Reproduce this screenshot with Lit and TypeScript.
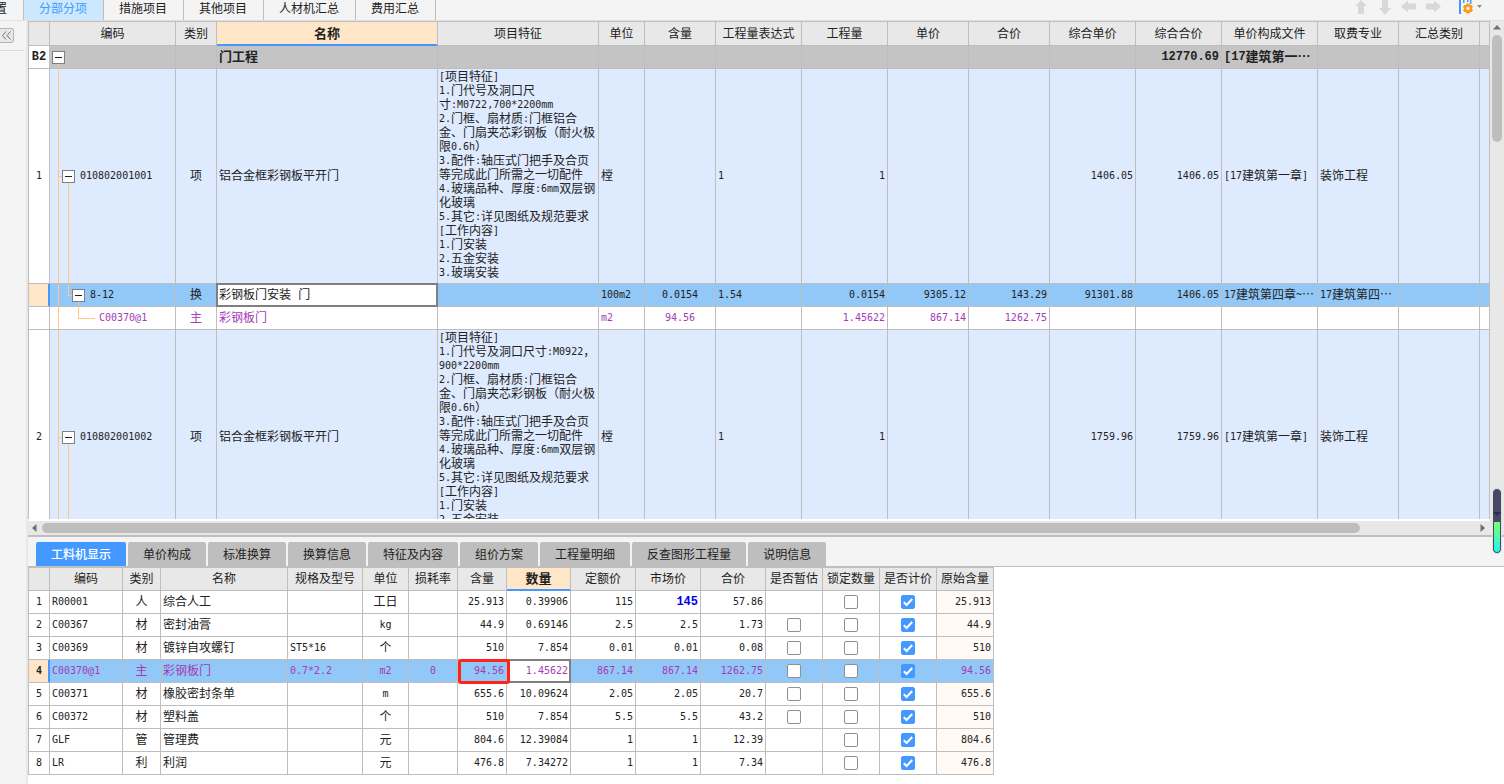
import { LitElement, html, css, nothing } from "lit";
import { customElement } from "lit/decorators.js";
import { classMap } from "lit/directives/class-map.js";

// Splits a label so that its Latin letters and digits get the half-width face.
const mix = (text: string) =>
  text
    .split(/([\x20-\x7e]+)/)
    .filter((part) => part !== "")
    .map((part) => (/^[\x20-\x7e]/.test(part) ? html`<span class="m">${part}</span>` : part));

interface Column {
  label: string;
  width: number;
  align: "left" | "center" | "right";
  current?: boolean;
}

const sharedStyles = css`
  * {
    box-sizing: border-box;
  }
  button,
  input {
    font: inherit;
    color: inherit;
    margin: 0;
    padding: 0;
    border: 0;
    border-radius: 0;
    background: none;
  }
  table {
    border-collapse: separate;
    border-spacing: 0;
    table-layout: fixed;
    font: 12px/14px "Noto Sans CJK SC", sans-serif;
    color: #222;
  }
  th,
  td {
    height: 23px;
    padding: 0 2px 2px;
    border: 0 solid #bebebe;
    border-width: 0 1px 1px 0;
    font-weight: 400;
    white-space: nowrap;
    overflow: hidden;
    vertical-align: middle;
    text-align: left;
  }
  tr > :first-child {
    border-left-width: 1px;
    text-align: center;
  }
  thead th {
    background: #e8e8e8;
    border-top-width: 1px;
    height: 24px;
    text-align: center;
  }
  thead th.current {
    background: #ffe6c8;
    font-weight: 700;
    font-size: 13px;
    border-bottom-color: #4399ff;
    box-shadow: inset 0 -1px #4399ff;
  }
  .m {
    font: 10px/10px "DejaVu Sans Mono", monospace;
    vertical-align: 1px;
  }
  .center {
    text-align: center;
  }
  .right {
    text-align: right;
  }
  .selected > * {
    background-color: #92c8f8;
  }
  .selected > th {
    background-color: #ffe6c8;
    border-right-color: #4399ff;
    box-shadow: inset -1px 0 #4399ff;
  }
  .purple > td {
    color: #a639b5;
  }
  td.edit {
    padding: 0;
    overflow: visible;
  }
  td.edit input {
    display: block;
    width: 100%;
    height: 22px;
    padding: 0 2px;
    background: #fff;
    outline: 2px solid #7f7f7f;
    outline-offset: -1px;
  }
`;

const featureText = (first: string[]) => [
  "[项目特征]",
  ...first,
  "2.门框、扇材质:门框铝合",
  "金、门扇夹芯彩钢板（耐火极",
  "限0.6h）",
  "3.配件:轴压式门把手及合页",
  "等完成此门所需之一切配件",
  "4.玻璃品种、厚度:6mm双层钢",
  "化玻璃",
  "5.其它:详见图纸及规范要求",
  "[工作内容]",
  "1.门安装",
  "2.五金安装",
  "3.玻璃安装",
];

const billColumns: Column[] = [
  { label: "编码", width: 126, align: "left" },
  { label: "类别", width: 41, align: "center" },
  { label: "名称", width: 221, align: "left", current: true },
  { label: "项目特征", width: 161, align: "left" },
  { label: "单位", width: 46, align: "left" },
  { label: "含量", width: 71, align: "center" },
  { label: "工程量表达式", width: 86, align: "left" },
  { label: "工程量", width: 86, align: "right" },
  { label: "单价", width: 81, align: "right" },
  { label: "合价", width: 81, align: "right" },
  { label: "综合单价", width: 86, align: "right" },
  { label: "综合合价", width: 86, align: "right" },
  { label: "单价构成文件", width: 96, align: "left" },
  { label: "取费专业", width: 81, align: "left" },
  { label: "汇总类别", width: 81, align: "left" },
];

interface BillRow {
  no: string;
  kind: "group" | "item" | "quota" | "material";
  toggle: boolean;
  feature?: string[];
  cells: string[];
}

const billRows: BillRow[] = [
  {
    no: "B2",
    kind: "group",
    toggle: true,
    cells: ["", "", "门工程", "", "", "", "", "", "", "", "", "12770.69", "[17建筑第一…", "", ""],
  },
  {
    no: "1",
    kind: "item",
    toggle: true,
    feature: featureText(["1.门代号及洞口尺", "寸:M0722,700*2200mm"]),
    cells: ["010802001001", "项", "铝合金框彩钢板平开门", "", "樘", "", "1", "1", "", "", "1406.05", "1406.05", "[17建筑第一章]", "装饰工程", ""],
  },
  {
    no: "",
    kind: "quota",
    toggle: true,
    cells: ["8-12", "换", "彩钢板门安装 门", "", "100m2", "0.0154", "1.54", "0.0154", "9305.12", "143.29", "91301.88", "1406.05", "17建筑第四章~…", "17建筑第四…", ""],
  },
  {
    no: "",
    kind: "material",
    toggle: false,
    cells: ["C00370@1", "主", "彩钢板门", "", "m2", "94.56", "", "1.45622", "867.14", "1262.75", "", "", "", "", ""],
  },
  {
    no: "2",
    kind: "item",
    toggle: true,
    feature: featureText(["1.门代号及洞口尺寸:M0922，", "900*2200mm"]),
    cells: ["010802001002", "项", "铝合金框彩钢板平开门", "", "樘", "", "1", "1", "", "", "1759.96", "1759.96", "[17建筑第一章]", "装饰工程", ""],
  },
];

@customElement("bill-grid")
export class BillGrid extends LitElement {
  static styles = [
    sharedStyles,
    css`
      :host {
        display: block;
        overflow: hidden;
        background: #fff;
      }
      table {
        width: 100%;
      }
      thead th {
        height: 25px;
      }
      .no {
        width: 22px;
      }
      .group > td {
        background-color: #c4c4c4;
        border-color: #bebebe;
        font-weight: 700;
        font-size: 13px;
      }
      .group .m {
        font: 700 12px/12px "Liberation Mono", monospace;
      }
      .item > td {
        background-color: #deeafe;
      }
      .feature {
        padding: 0 0 4px 1px;
      }
      .code {
        padding: 0;
        background-repeat: no-repeat;
      }
      .node {
        display: flex;
        align-items: center;
        gap: 5px;
      }
      .node span {
        display: block;
      }
      .toggle {
        width: 13px;
        height: 13px;
        border: 1px solid #808080;
        background: #fff;
        display: grid;
        place-items: center;
      }
      .toggle::before {
        content: "";
        width: 7px;
        height: 1px;
        background: #222;
      }
      /* Tree guides: each layer is one straight segment. */
      .group .code {
        background-image: linear-gradient(#ffc880, #ffc880);
        background-size: 1px 50%;
        background-position: 8px 100%;
      }
      .group .node {
        padding-left: 2px;
      }
      .item .code {
        background-image: linear-gradient(#ffc880, #ffc880), linear-gradient(#ffc880, #ffc880),
          linear-gradient(#ffc880, #ffc880);
        background-size: 1px 100%, 4px 1px, 1px 50%;
        background-position: 8px 0, 8px 50%, 18px 100%;
      }
      .item .node {
        padding-left: 12px;
      }
      .quota .code {
        background-image: linear-gradient(#ffc880, #ffc880), linear-gradient(#ffc880, #ffc880),
          linear-gradient(#ffc880, #ffc880), linear-gradient(#ffc880, #ffc880);
        background-size: 1px 100%, 1px 50%, 4px 1px, 1px 50%;
        background-position: 8px 0, 18px 0, 18px 50%, 28px 100%;
      }
      .quota .node {
        padding-left: 22px;
      }
      .material .code {
        background-image: linear-gradient(#ffc880, #ffc880), linear-gradient(#ffc880, #ffc880),
          linear-gradient(#ffc880, #ffc880);
        background-size: 1px 100%, 1px 50%, 17px 1px;
        background-position: 8px 0, 28px 0, 28px 50%;
      }
      .material .node {
        padding-left: 49px;
      }
      td.edit input {
        padding-bottom: 3px;
        font-family: "DejaVu Sans Mono", "Noto Sans CJK SC", monospace;
      }
    `,
  ];

  private cell(row: BillRow, text: string, i: number) {
    if (i === 0) {
      return html`<td class="code">
        <div class="node">
          ${row.toggle ? html`<button class="toggle" aria-label="折叠"></button>` : nothing}${mix(text)}
        </div>
      </td>`;
    }
    if (i === 2 && row.kind === "quota") {
      return html`<td class="edit"><input aria-label="名称" .value=${text} /></td>`;
    }
    if (i === 3 && row.feature) {
      return html`<td class="feature">${row.feature.map((line) => html`<div>${mix(line)}</div>`)}</td>`;
    }
    return html`<td class=${billColumns[i].align}>${mix(text)}</td>`;
  }

  render() {
    return html`<table>
      <colgroup>
        <col class="no" />
        ${billColumns.map((c) => html`<col style="width:${c.width}px" />`)}
        <col />
      </colgroup>
      <thead>
        <tr>
          <th></th>
          ${billColumns.map((c) => html`<th class=${classMap({ current: !!c.current })}>${c.label}</th>`)}
          <th></th>
        </tr>
      </thead>
      <tbody>
        ${billRows.map(
          (row) => html`<tr
            class=${classMap({
              [row.kind]: true,
              selected: row.kind === "quota",
              purple: row.kind === "material",
            })}
          >
            <th scope="row">${mix(row.no)}</th>
            ${row.cells.map((text, i) => this.cell(row, text, i))}
            <td></td>
          </tr>`
        )}
      </tbody>
    </table>`;
  }
}

const resourceColumns: Column[] = [
  { label: "编码", width: 73, align: "left" },
  { label: "类别", width: 38, align: "center" },
  { label: "名称", width: 127, align: "left" },
  { label: "规格及型号", width: 75, align: "left" },
  { label: "单位", width: 46, align: "center" },
  { label: "损耗率", width: 49, align: "center" },
  { label: "含量", width: 49, align: "right" },
  { label: "数量", width: 64, align: "right", current: true },
  { label: "定额价", width: 65, align: "right" },
  { label: "市场价", width: 65, align: "right" },
  { label: "合价", width: 65, align: "right" },
];
const checkColumns = ["是否暂估", "锁定数量", "是否计价"];

interface Resource {
  cells: string[];
  provisional: boolean;
}

const resources: Resource[] = [
  { cells: ["R00001", "人", "综合人工", "", "工日", "", "25.913", "0.39906", "115", "145", "57.86"], provisional: false },
  { cells: ["C00367", "材", "密封油膏", "", "kg", "", "44.9", "0.69146", "2.5", "2.5", "1.73"], provisional: true },
  { cells: ["C00369", "材", "镀锌自攻螺钉", "ST5*16", "个", "", "510", "7.854", "0.01", "0.01", "0.08"], provisional: true },
  { cells: ["C00370@1", "主", "彩钢板门", "0.7*2.2", "m2", "0", "94.56", "1.45622", "867.14", "867.14", "1262.75"], provisional: true },
  { cells: ["C00371", "材", "橡胶密封条单", "", "m", "", "655.6", "10.09624", "2.05", "2.05", "20.7"], provisional: true },
  { cells: ["C00372", "材", "塑料盖", "", "个", "", "510", "7.854", "5.5", "5.5", "43.2"], provisional: true },
  { cells: ["GLF", "管", "管理费", "", "元", "", "804.6", "12.39084", "1", "1", "12.39"], provisional: false },
  { cells: ["LR", "利", "利润", "", "元", "", "476.8", "7.34272", "1", "1", "7.34"], provisional: false },
];
const selectedResource = 3;

@customElement("resource-grid")
export class ResourceGrid extends LitElement {
  static styles = [
    sharedStyles,
    css`
      :host {
        display: block;
        background: #fff;
        overflow-x: auto;
        padding-bottom: 9px;
      }
      table {
        width: 966px;
      }
      .no {
        width: 22px;
      }
      .wide {
        width: 57px;
      }
      td.original {
        background-color: #fffaf5;
      }
      .selected td.original {
        background-color: #92c8f8;
      }
      td.override .m {
        color: #0000f0;
        font: 700 12px/12px "Liberation Mono", monospace;
      }
      .selected > th .m {
        font-weight: 700;
      }
      td.edit input {
        font: 10px/22px "DejaVu Sans Mono", monospace;
        text-align: right;
      }
      td.marked {
        position: relative;
        overflow: visible;
      }
      td.marked::after {
        content: "";
        position: absolute;
        z-index: 1;
        inset: -1px -4px -2px 0;
        border: 3px solid #ff2419;
        border-radius: 3px;
      }
      td.tick {
        padding: 0;
      }
      .check {
        appearance: none;
        display: block;
        width: 14px;
        height: 14px;
        margin: 0 auto;
        border: 1px solid #909090;
        border-radius: 2px;
        background: #fff;
      }
      .check:checked {
        border-color: #4399ff;
        background: #4399ff
          url("data:image/svg+xml,%3Csvg xmlns='http://www.w3.org/2000/svg' viewBox='0 0 12 12'%3E%3Cpath d='M1.8 6.2l2.8 2.8 5.6-6' fill='none' stroke='%23fff' stroke-width='2'/%3E%3C/svg%3E")
          center / 12px 12px no-repeat;
      }
    `,
  ];

  private cell(text: string, row: number, i: number) {
    if (row === selectedResource && i === 7) {
      return html`<td class="edit"><input aria-label="数量" .value=${text} /></td>`;
    }
    const classes = {
      [resourceColumns[i].align]: true,
      marked: row === selectedResource && i === 6,
      override: row === 0 && i === 9,
    };
    return html`<td class=${classMap(classes)}>${mix(text)}</td>`;
  }

  render() {
    return html`<table>
      <colgroup>
        <col class="no" />
        ${resourceColumns.map((c) => html`<col style="width:${c.width}px" />`)}
        <col class="wide" /><col class="wide" /><col class="wide" /><col class="wide" />
      </colgroup>
      <thead>
        <tr>
          <th></th>
          ${resourceColumns.map((c) => html`<th class=${classMap({ current: !!c.current })}>${c.label}</th>`)}
          ${checkColumns.map((label) => html`<th>${label}</th>`)}
          <th>原始含量</th>
        </tr>
      </thead>
      <tbody>
        ${resources.map(
          (r, n) => html`<tr class=${classMap({ selected: n === selectedResource, purple: n === selectedResource })}>
            <th scope="row">${mix(String(n + 1))}</th>
            ${r.cells.map((text, i) => this.cell(text, n, i))}
            <td class="tick">${r.provisional ? html`<input class="check" type="checkbox" aria-label=${checkColumns[0]} />` : nothing}</td>
            <td class="tick"><input class="check" type="checkbox" aria-label=${checkColumns[1]} /></td>
            <td class="tick"><input class="check" type="checkbox" aria-label=${checkColumns[2]} checked /></td>
            <td class="right original">${mix(r.cells[6])}</td>
          </tr>`
        )}
      </tbody>
    </table>`;
  }
}

const mainTabs = ["置", "分部分项", "措施项目", "其他项目", "人材机汇总", "费用汇总"];
const detailTabs = ["工料机显示", "单价构成", "标准换算", "换算信息", "特征及内容", "组价方案", "工程量明细", "反查图形工程量", "说明信息"];

@customElement("app-root")
export class AppRoot extends LitElement {
  static styles = css`
    * {
      box-sizing: border-box;
    }
    :host {
      display: flex;
      flex-direction: column;
      height: 100vh;
      overflow: hidden;
      background: #f4f4f4;
      color: #222;
      font: 12px/14px "Noto Sans CJK SC", sans-serif;
    }
    button {
      font: inherit;
      color: inherit;
      margin: 0;
      padding: 0;
      border: 0;
      background: none;
    }
    .topbar {
      display: flex;
      justify-content: space-between;
      height: 21px;
      border-bottom: 1px solid #e0e0e0;
      flex: none;
    }
    .tabs {
      display: flex;
    }
    .tabs button {
      padding: 0 16px 4px 15px;
      border-right: 1px solid #bebebe;
    }
    .tabs button:first-child {
      width: 24px;
      padding-left: 0;
      display: flex;
      justify-content: flex-end;
      align-items: center;
    }
    .tabs button.active {
      background: #cce8ff;
      color: #4399ff;
    }
    .tools {
      display: flex;
      align-items: flex-start;
      gap: 8px;
      padding-right: 21px;
    }
    .tools button {
      height: 16px;
    }
    .tools button:last-child {
      margin-left: 8px;
    }
    .tools svg {
      display: block;
    }
    .workspace {
      flex: 1;
      min-height: 0;
      display: flex;
    }
    .rail {
      width: 28px;
      flex: none;
      border-right: 2px solid #e8e8e8;
    }
    .rail div {
      height: 30px;
      margin-right: 2px;
      padding-top: 7px;
      border-bottom: 1px solid #dcdcdc;
    }
    .rail button {
      width: 14px;
      height: 15px;
      border: 1px solid #b4b4b4;
      border-left: 0;
      border-radius: 0 3px 3px 0;
      background: #e8e8e8;
      display: grid;
      place-items: center;
    }
    .panes {
      flex: 1;
      min-width: 0;
      display: flex;
      flex-direction: column;
    }
    .upper {
      flex: 1;
      min-height: 0;
      display: flex;
      background: #fff;
    }
    .upper bill-grid {
      flex: 1;
      min-width: 0;
      margin-bottom: 2px;
    }
    .vscroll {
      width: 14px;
      flex: none;
      background: #e8e8e8;
      display: flex;
      flex-direction: column;
      align-items: center;
      gap: 5px;
      padding-top: 4px;
    }
    .vscroll .thumb {
      width: 10px;
      height: 25%;
      max-height: 107px;
    }
    .thumb {
      border-radius: 5px;
      background: #bebebe;
    }
    .hscroll {
      height: 14px;
      flex: none;
      background: #e8e8e8;
      display: flex;
      align-items: center;
      gap: 5px;
      padding: 0 19px 0 4px;
    }
    .track {
      flex: 1;
      display: flex;
    }
    .hscroll .thumb {
      width: 92%;
      height: 10px;
    }
    .detail-tabs {
      flex: none;
      display: flex;
      gap: 2px;
      padding: 5px 8px 0;
      border-top: 2px solid #bebebe;
      border-bottom: 1px solid #bebebe;
    }
    .detail-tabs button {
      height: 24px;
      padding: 0 15px;
      background: #bebebe;
      border-radius: 2px 2px 0 0;
    }
    .detail-tabs button.active {
      background: #4399ff;
      color: #fff;
      font-weight: 500;
    }
    .meter {
      position: absolute;
      right: 2px;
      top: 488px;
    }
  `;

  render() {
    return html`
      <header class="topbar">
        <nav class="tabs">
          ${mainTabs.map((t, i) => html`<button class=${classMap({ active: i === 1 })}>${t}</button>`)}
        </nav>
        <div class="tools">
          <button aria-label="上移">
            <svg width="16" height="16"><path d="M8 0l6 6h-3v8H5V6H2z" fill="#d8d8d8" /></svg>
          </button>
          <button aria-label="下移">
            <svg width="16" height="16"><path d="M5 0h6v8h3l-6 7-6-7h3z" fill="#d8d8d8" /></svg>
          </button>
          <button aria-label="左移">
            <svg width="16" height="16"><path d="M0 6.500l7-6v3h8v6H7v3z" fill="#d8d8d8" /></svg>
          </button>
          <button aria-label="右移">
            <svg width="16" height="16"><path d="M16 6.500l-7-6v3H1v6h8v3z" fill="#d8d8d8" /></svg>
          </button>
          <button aria-label="设置">
            <svg width="26" height="16">
              <path d="M2 0h2v14H2zM6 0h1.500v3H6zM10 0h1.500v2H10zM13 0h1.500v4H13z" fill="#4399ff" />
              <path
                fill="#ff9a1f"
                fill-rule="evenodd"
                d="M9.500 3.500h3l.6 1.600 1.800-.2 1 2-1.100 1.600 1.100 1.600-1 2-1.800-.2-.6 1.600h-3l-.6-1.600-1.800.2-1-2 1.100-1.600L6.100 6.900l1-2 1.800.2zM11 6.700a1.800 1.800 0 1 0 0 3.600 1.800 1.800 0 0 0 0-3.600z"
              />
              <path d="M20 5h5l-2.500 3z" fill="#8a8a8a" />
            </svg>
          </button>
        </div>
      </header>
      <div class="workspace">
        <aside class="rail">
          <div>
            <button aria-label="收起">
              <svg width="11" height="9">
                <path d="M5 .5L1.500 4.500 5 8.500M9.500 .5L6 4.500l3.500 4" fill="none" stroke="#707070" />
              </svg>
            </button>
          </div>
        </aside>
        <main class="panes">
          <section class="upper">
            <bill-grid></bill-grid>
            <div class="vscroll">
              <svg width="8" height="5"><path d="M4 0l4 4.500H0z" fill="#6e6e78" /></svg>
              <div class="thumb"></div>
            </div>
          </section>
          <div class="hscroll">
            <svg width="5" height="8"><path d="M0 4l4.500-4v8z" fill="#6e6e78" /></svg>
            <div class="track"><div class="thumb"></div></div>
            <svg width="5" height="8"><path d="M5 4L.5 0v8z" fill="#6e6e78" /></svg>
          </div>
          <nav class="detail-tabs">
            ${detailTabs.map((t, i) => html`<button class=${classMap({ active: i === 0 })}>${t}</button>`)}
          </nav>
          <resource-grid></resource-grid>
        </main>
      </div>
      <svg class="meter" width="10" height="66" viewBox="0 0 10 66">
        <defs>
          <linearGradient id="level" x2="0" y2="1">
            <stop offset="0" stop-color="#7dff6a" />
            <stop offset="1" stop-color="#22f4f4" />
          </linearGradient>
        </defs>
        <rect x=".5" y=".5" width="9" height="65" rx="4.500" fill="#464866" stroke="#e4e4e4" />
        <path d="M1 24h8l-4 4z" fill="#2c2e48" />
        <path d="M2 34h6v27a3 3 0 0 1-6 0z" fill="url(#level)" />
      </svg>
    `;
  }
}
